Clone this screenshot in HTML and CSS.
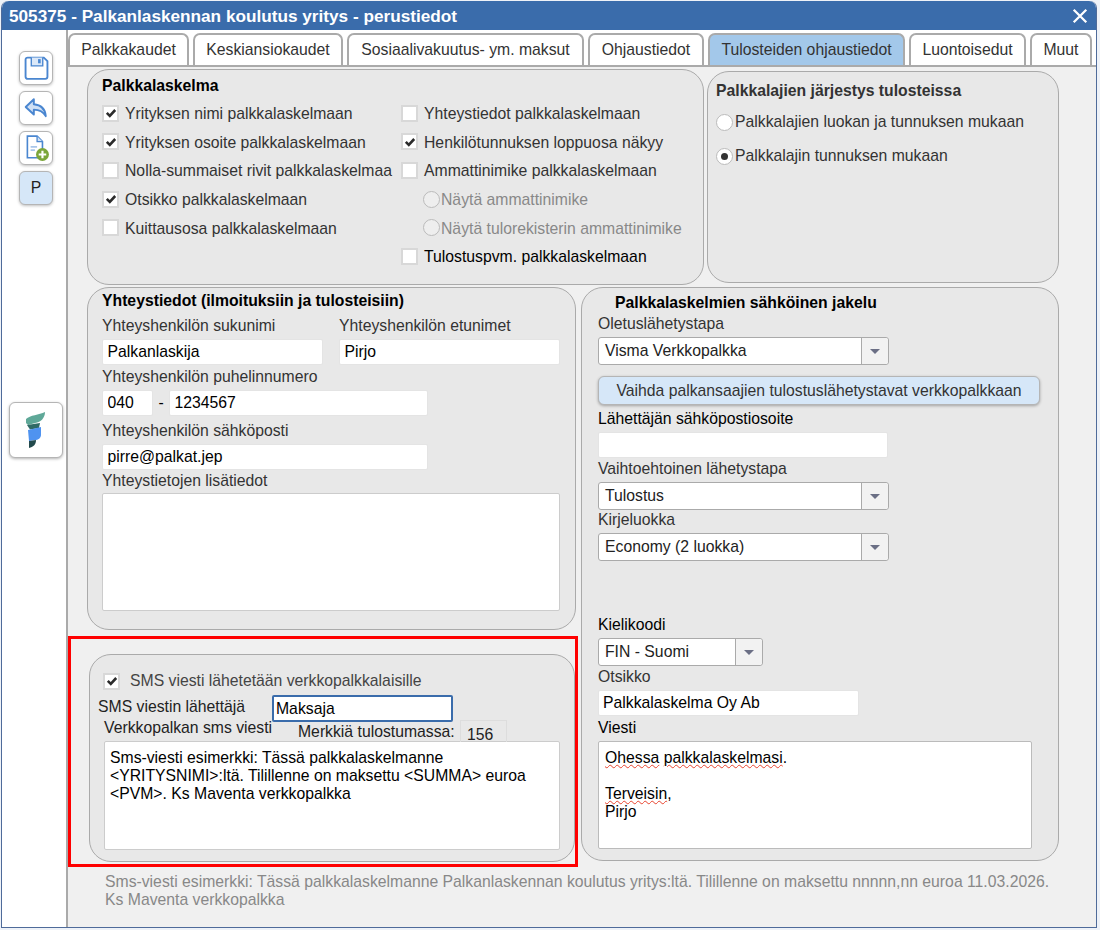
FILE: index.html
```html
<!DOCTYPE html>
<html lang="fi">
<head>
    <meta charset="UTF-8">
    <title>505375 - perustiedot</title>
    <link rel="stylesheet" href="styles.css">
</head>
<body>
    <svg class="defs" width="0" height="0">
        <symbol id="tick" viewBox="0 0 12 12"><path d="M1.800 5.800 4.800 8.800 10.200 3" fill="none" stroke="#2b2b2b" stroke-width="2.600"/></symbol>
        <symbol id="caret" viewBox="0 0 12 7"><path d="M1 1h10L6 6z" fill="#6b6f85"/></symbol>
    </svg>
    <div class="dialog">
        <div class="titlebar">
            <span>505375 - Palkanlaskennan koulutus yritys - perustiedot</span>
            <svg class="close" viewBox="0 0 14 14"><path d="M1.500 1.500 12.500 12.500M12.500 1.500 1.500 12.500" stroke="#fff" stroke-width="2"/></svg>
        </div>
        <div class="body">
            <div class="sidebar">
                <div class="tool">
                    <svg viewBox="0 0 24 24" width="25" height="25"><path d="M3.500 1.500H19l3.500 3.500v15a2 2 0 0 1-2 2h-17a2 2 0 0 1-2-2v-16.500a2 2 0 0 1 2-2z" fill="none" stroke="#4a86d0" stroke-width="1.800"/><path d="M7 1.500v8h11v-8" fill="#dbe8f8" stroke="#4a86d0" stroke-width="1.300"/><rect x="13.500" y="3" width="2.500" height="4" fill="#4a86d0"/></svg>
                </div>
                <div class="tool">
                    <svg viewBox="0 0 24 24" width="26" height="26"><path d="M10 4 2.500 11 10 18v-4.500c5 0 8.500 1.500 11 6-.5-6.500-4.500-10.500-11-11z" fill="#cfe0f5" stroke="#4a86d0" stroke-width="1.800" stroke-linejoin="round"/></svg>
                </div>
                <div class="tool">
                    <svg viewBox="0 0 26 26" width="28" height="28"><path d="M5 2h9l5 5v15H5z" fill="#fff" stroke="#4a86d0" stroke-width="1.500"/><path d="M14 2v5h5" fill="#cfe0f5" stroke="#4a86d0" stroke-width="1.200"/><path d="M8 12h6M8 15h4" stroke="#a9c6ea" stroke-width="1.500"/><circle cx="19" cy="19" r="6" fill="#7ba63a"/><path d="M15.500 19h7M19 15.500v7" stroke="#fff" stroke-width="2"/></svg>
                </div>
                <div class="tool tool-active">P</div>
                <div class="logo-btn">
                    <svg viewBox="0 0 20 40" width="20" height="40">
                        <path d="M0 9C4 5 13 5 19 2c0 6-4 10-10 11l-7 2-2-2z" fill="#5fa898"/>
                        <path d="M1 15 14 13 13 18 4 19.500z" fill="#2f6b66"/>
                        <path d="M2 20 15 17v8c0 3-3 5-6 5l-6 1z" fill="#4f93f0"/>
                        <path d="M3 31 10 30c0 5-3 7-7 8z" fill="#234a4c"/>
                    </svg>
                </div>
            </div>
            <div class="main">
                <div class="tabs">
                    <div class="tab">Palkkakaudet</div>
                    <div class="tab">Keskiansiokaudet</div>
                    <div class="tab">Sosiaalivakuutus- ym. maksut</div>
                    <div class="tab">Ohjaustiedot</div>
                    <div class="tab tab-active">Tulosteiden ohjaustiedot</div>
                    <div class="tab">Luontoisedut</div>
                    <div class="tab">Muut</div>
                </div>
                <div class="content">
                    <div class="top-row">
                        <div class="panel panel-payslip">
                            <div class="panel-title black">Palkkalaskelma</div>
                            <div class="payslip-grid">
                                <div>
                                    <div class="row"><span class="check"><svg><use href="#tick"/></svg></span>Yrityksen nimi palkkalaskelmaan</div>
                                    <div class="row"><span class="check"><svg><use href="#tick"/></svg></span>Yrityksen osoite palkkalaskelmaan</div>
                                    <div class="row"><span class="check"></span>Nolla-summaiset rivit palkkalaskelmaa</div>
                                    <div class="row"><span class="check"><svg><use href="#tick"/></svg></span>Otsikko palkkalaskelmaan</div>
                                    <div class="row"><span class="check"></span>Kuittausosa palkkalaskelmaan</div>
                                </div>
                                <div>
                                    <div class="row"><span class="check"></span>Yhteystiedot palkkalaskelmaan</div>
                                    <div class="row"><span class="check"><svg><use href="#tick"/></svg></span>Henkilötunnuksen loppuosa näkyy</div>
                                    <div class="row"><span class="check"></span>Ammattinimike palkkalaskelmaan</div>
                                    <div class="row row-sub"><span class="radio radio-off"></span>Näytä ammattinimike</div>
                                    <div class="row row-sub"><span class="radio radio-off"></span>Näytä tulorekisterin ammattinimike</div>
                                    <div class="row black"><span class="check"></span>Tulostuspvm. palkkalaskelmaan</div>
                                </div>
                            </div>
                        </div>
                        <div class="panel panel-order">
                            <div class="panel-title">Palkkalajien järjestys tulosteissa</div>
                            <div class="order-row"><span class="radio"></span>Palkkalajien luokan ja tunnuksen mukaan</div>
                            <div class="order-row"><span class="radio radio-on"></span>Palkkalajin tunnuksen mukaan</div>
                        </div>
                    </div>
                    <div class="columns">
                        <div class="left-col">
                            <div class="panel panel-contact">
                                <div class="panel-title black">Yhteystiedot (ilmoituksiin ja tulosteisiin)</div>
                                <div class="name-row">
                                    <div class="field">
                                        <label>Yhteyshenkilön sukunimi</label>
                                        <input class="w-name" value="Palkanlaskija">
                                    </div>
                                    <div class="field">
                                        <label>Yhteyshenkilön etunimet</label>
                                        <input class="w-name" value="Pirjo">
                                    </div>
                                </div>
                                <div class="field mt-2">
                                    <label>Yhteyshenkilön puhelinnumero</label>
                                    <div class="phone">
                                        <input class="w-area" value="040">
                                        <span class="dash">-</span>
                                        <input class="w-phone" value="1234567">
                                    </div>
                                </div>
                                <div class="field mt-5">
                                    <label>Yhteyshenkilön sähköposti</label>
                                    <input class="w-mail" value="pirre@palkat.jep">
                                </div>
                                <div class="field mt-1 gap-4">
                                    <label>Yhteystietojen lisätiedot</label>
                                    <textarea class="area-info"></textarea>
                                </div>
                            </div>
                            <div class="highlight">
                                <div class="panel panel-sms">
                                    <div class="sms-check"><span class="check"><svg><use href="#tick"/></svg></span>SMS viesti lähetetään verkkopalkkalaisille</div>
                                    <div class="sms-sender">
                                        <label>SMS viestin lähettäjä</label>
                                        <input class="input-focus" value="Maksaja">
                                    </div>
                                    <div class="sms-meta">
                                        <label class="sms-label">Verkkopalkan sms viesti</label>
                                        <label class="sms-count-label">Merkkiä tulostumassa:</label>
                                        <div class="sms-count">156</div>
                                    </div>
                                    <textarea class="area-sms">Sms-viesti esimerkki: Tässä palkkalaskelmanne &lt;YRITYSNIMI&gt;:ltä. Tilillenne on maksettu &lt;SUMMA&gt; euroa &lt;PVM&gt;. Ks Maventa verkkopalkka</textarea>
                                </div>
                            </div>
                        </div>
                        <div class="panel panel-delivery">
                            <div class="panel-title black title-indent">Palkkalaskelmien sähköinen jakelu</div>
                            <div class="field mt-3">
                                <label>Oletuslähetystapa</label>
                                <div class="select"><span class="select-value">Visma Verkkopalkka</span><span class="select-btn"><svg><use href="#caret"/></svg></span></div>
                            </div>
                            <button class="wide-btn">Vaihda palkansaajien tulostuslähetystavat verkkopalkkaan</button>
                            <div class="field mt-4">
                                <label class="black">Lähettäjän sähköpostiosoite</label>
                                <input class="w-from">
                            </div>
                            <div class="field mt-1">
                                <label>Vaihtoehtoinen lähetystapa</label>
                                <div class="select"><span class="select-value">Tulostus</span><span class="select-btn"><svg><use href="#caret"/></svg></span></div>
                            </div>
                            <div class="field">
                                <label>Kirjeluokka</label>
                                <div class="select"><span class="select-value">Economy (2 luokka)</span><span class="select-btn"><svg><use href="#caret"/></svg></span></div>
                            </div>
                            <div class="field mt-54">
                                <label class="black">Kielikoodi</label>
                                <div class="select select-short"><span class="select-value">FIN - Suomi</span><span class="select-btn"><svg><use href="#caret"/></svg></span></div>
                            </div>
                            <div class="field mt-1">
                                <label>Otsikko</label>
                                <input class="w-subject" value="Palkkalaskelma Oy Ab">
                            </div>
                            <div class="field mt-2">
                                <label class="black">Viesti</label>
                                <div class="area-msg">
                                    <span class="typo">Ohessa</span> <span class="typo">palkkalaskelmasi</span>.<br><br>
                                    <span class="typo">Terveisin</span>,<br>
                                    Pirjo
                                </div>
                            </div>
                        </div>
                    </div>
                    <div class="note">Sms-viesti esimerkki: Tässä palkkalaskelmanne Palkanlaskennan koulutus yritys:ltä. Tilillenne on maksettu nnnnn,nn euroa 11.03.2026. Ks Maventa verkkopalkka</div>
                </div>
            </div>
        </div>
    </div>
</body>
</html>
```

FILE: styles.css
```css
* {
    box-sizing: border-box;
}
body {
    margin: 0;
    height: 930px;
    overflow: hidden;
    background-color: #eef2f8;
    color: #333;
    font-family: "Liberation Sans", Arial, sans-serif;
    font-size: 15.75px;
    line-height: 18px;
}
.defs {
    position: absolute;
}
.black {
    color: #000;
}
.dialog {
    width: 1096px;
    height: 927px;
    margin: 1px 0 0 1px;
    border: 1px solid #4f6b9a;
    border-top: none;
    border-radius: 7px 7px 0 0;
    background-color: #fff;
    display: flex;
    flex-direction: column;
}
.titlebar {
    height: 29px;
    flex: none;
    padding: 0 8px 0 7px;
    background-color: #3a6cab;
    border-radius: 7px 7px 0 0;
    color: #fff;
    font-size: 17.2px;
    font-weight: bold;
    display: flex;
    align-items: center;
    justify-content: space-between;
}
.close {
    width: 16px;
    height: 16px;
}
.body {
    flex: 1;
    display: flex;
    min-height: 0;
}
.sidebar {
    width: 64px;
    flex: none;
    padding: 21px 0 0 17px;
    display: flex;
    flex-direction: column;
    gap: 6px;
}
.tool {
    width: 34px;
    height: 34px;
    border: 1px solid #b5b5b5;
    border-radius: 6px;
    background-color: #fff;
    box-shadow: 0 1px 3px rgba(0, 0, 0, 0.25);
    display: flex;
    align-items: center;
    justify-content: center;
}
.tool-active {
    background-color: #d6e7f8;
    color: #222;
}
.logo-btn {
    width: 54px;
    height: 56px;
    margin: 191px 0 0 -10px;
    border: 1px solid #b5b5b5;
    border-radius: 6px;
    background-color: #fff;
    box-shadow: 0 1px 3px rgba(0, 0, 0, 0.3);
    display: flex;
    align-items: center;
    justify-content: center;
}
.main {
    flex: 1;
    min-width: 0;
    display: flex;
    flex-direction: column;
    border-left: 2px solid #aaa;
}
.tabs {
    height: 37px;
    flex: none;
    padding-top: 3px;
    display: grid;
    grid-template-columns: 121px 150px 237px 116px 197px 117px 62px;
    gap: 4px;
    border-bottom: 2px solid #aaa;
}
.tab {
    height: 32px;
    border: 2px solid #aaa;
    border-bottom: none;
    border-radius: 7px 7px 0 0;
    background-color: #fff;
    display: flex;
    align-items: center;
    justify-content: center;
    white-space: nowrap;
}
.tab-active {
    background-color: #a3c8ea;
}
.content {
    flex: 1;
    padding: 2px 0 0 19px;
    background-color: #f0f0f0;
}
.panel {
    border: 1px solid #aaa;
    border-radius: 22px;
    background-color: #e8e8e8;
}
.panel-title {
    font-weight: bold;
    margin-top: 1px;
    margin-bottom: -1px;
}
.top-row {
    display: flex;
    align-items: flex-start;
    gap: 3px;
}
.panel-payslip {
    width: 617px;
    height: 216px;
    padding: 6px 0 0 14px;
}
.payslip-grid {
    margin-top: 5px;
    display: grid;
    grid-template-columns: 299px 1fr;
}
.row {
    height: 28.6px;
    padding-top: 2px;
    display: flex;
    align-items: center;
    gap: 6px;
}
.row .check,
.row .radio {
    margin-top: -2px;
}
.row-sub {
    padding-left: 22px;
    color: #888;
    gap: 1px;
}
.panel-order {
    width: 352px;
    height: 212px;
    margin-top: 2px;
    padding: 9px 0 0 8px;
}
.order-row {
    height: 34px;
    display: flex;
    align-items: center;
    gap: 2px;
}
.panel-title + .order-row {
    margin-top: 6px;
}
.check {
    width: 17px;
    height: 17px;
    flex: none;
    border: 2px solid #d8d8d8;
    background-color: #fff;
    display: flex;
    align-items: center;
    justify-content: center;
}
.check svg {
    width: 12px;
    height: 12px;
}
.radio {
    width: 17px;
    height: 17px;
    flex: none;
    border: 1px solid #bbb;
    border-radius: 50%;
    background-color: #fff;
    display: flex;
    align-items: center;
    justify-content: center;
}
.radio-off {
    background-color: #eee;
}
.radio-on::after {
    content: "";
    width: 7px;
    height: 7px;
    border-radius: 50%;
    background-color: #333;
}
.columns {
    margin-top: 2px;
    display: flex;
    align-items: flex-start;
    gap: 5px;
}
.left-col {
    width: 489px;
}
.panel-contact {
    height: 343px;
    padding: 3px 0 0 14px;
}
.name-row {
    margin-top: 7px;
    display: flex;
    gap: 16px;
}
.field {
    display: flex;
    flex-direction: column;
    align-items: flex-start;
    gap: 5px;
}
.field label {
    margin-top: 1px;
    margin-bottom: -1px;
}
.gap-4 {
    gap: 4px;
}
.mt-1 {
    margin-top: 1px;
}
.mt-2 {
    margin-top: 2px;
}
.mt-3 {
    margin-top: 3px;
}
.mt-4 {
    margin-top: 4px;
}
.mt-5 {
    margin-top: 5px;
}
.mt-54 {
    margin-top: 54px;
}
input,
textarea {
    display: block;
    padding: 2px 4.500px;
    border: 1px solid #e4e4e4;
    border-radius: 2px;
    background-color: #fff;
    color: #000;
    font: inherit;
    outline: none;
    resize: none;
}
.w-name {
    width: 221px;
    height: 26px;
}
.phone {
    display: flex;
    align-items: center;
}
.w-area {
    width: 51px;
    height: 26px;
}
.dash {
    width: 16px;
    text-align: center;
    color: #000;
}
.w-phone {
    width: 259px;
    height: 26px;
}
.w-mail {
    width: 326px;
    height: 26px;
}
.area-info {
    width: 458px;
    height: 118px;
    border-color: #ccc;
}
.highlight {
    width: 510px;
    height: 231px;
    margin: 6px 0 0 -19px;
    padding: 15px 0 0 18px;
    border: 3px solid #f00;
}
.panel-sms {
    width: 486px;
    height: 208px;
    padding: 16px 0 0 14px;
}
.sms-check {
    margin-left: -1px;
    display: flex;
    align-items: center;
    gap: 10px;
    color: #444;
    line-height: 20px;
}
.sms-sender {
    margin: 4px 0 0 -6px;
    display: flex;
    align-items: flex-start;
}
.sms-sender label {
    width: 174px;
    margin-top: 3px;
    color: #222;
}
.input-focus {
    width: 181px;
    height: 27px;
    border: 2px solid #3a6cab;
    padding: 2px 2px;
}
.sms-meta {
    height: 21px;
    margin-top: -2px;
    display: flex;
    align-items: flex-start;
}
.sms-label {
    width: 194px;
    margin-top: -1px;
    color: #222;
}
.sms-count-label {
    width: 162px;
    margin-top: 3px;
    color: #222;
}
.sms-count {
    width: 47px;
    height: 22px;
    padding: 5px 0 0 6px;
    border: 1px solid #ddd;
    border-bottom: none;
    color: #222;
}
.area-sms {
    width: 456px;
    height: 109px;
    padding: 7px 5px;
    border-color: #ccc;
}
.panel-delivery {
    width: 478px;
    height: 574px;
    padding: 5px 0 0 16px;
}
.title-indent {
    padding-left: 17px;
}
.select {
    width: 291px;
    height: 28px;
    border: 1px solid #aaa;
    border-radius: 3px;
    background-color: #fff;
    color: #222;
    display: flex;
}
.select-short {
    width: 165px;
}
.select-value {
    flex: 1;
    padding: 4px 6px;
}
.select-btn {
    width: 27px;
    flex: none;
    border-left: 1px solid #aaa;
    background-color: #f2f2f2;
    border-radius: 0 3px 3px 0;
    display: flex;
    align-items: center;
    justify-content: center;
}
.select-btn svg {
    width: 12px;
    height: 7px;
}
.wide-btn {
    display: block;
    width: 442px;
    height: 29px;
    margin-top: 11px;
    padding: 0;
    border: 1px solid #b5b5b5;
    border-radius: 6px;
    background-color: #d6e7f8;
    box-shadow: 0 1px 3px rgba(0, 0, 0, 0.3);
    color: #333;
    font: inherit;
}
.w-from {
    width: 290px;
    height: 26px;
}
.w-subject {
    width: 261px;
    height: 26px;
    padding-left: 4px;
}
.area-msg {
    width: 434px;
    height: 108px;
    padding: 7px 6px;
    border: 1px solid #bbb;
    border-radius: 2px;
    background-color: #fff;
    color: #000;
}
.typo {
    text-decoration: underline wavy #e8432e 1px;
}
.note {
    width: 960px;
    margin: 6px 0 0 18px;
    color: #888;
}
```
